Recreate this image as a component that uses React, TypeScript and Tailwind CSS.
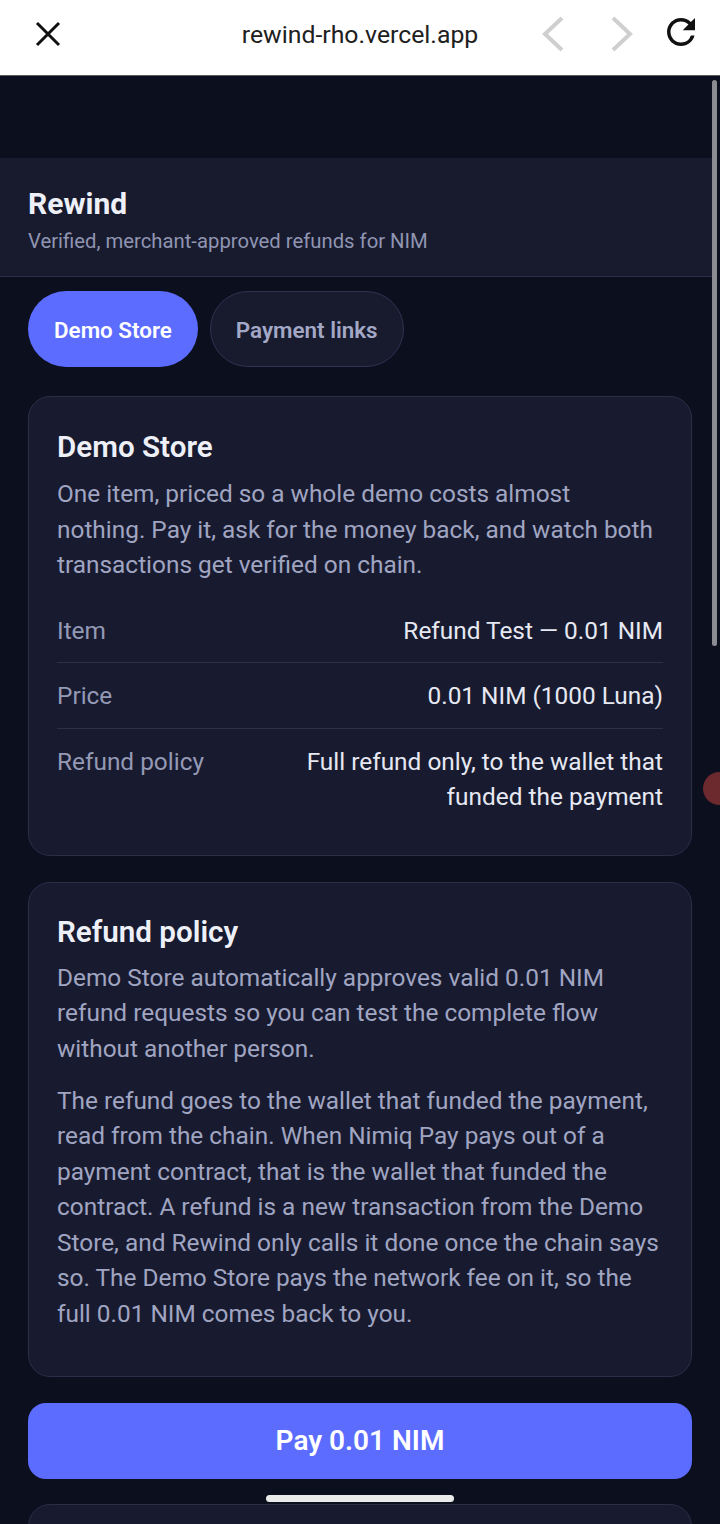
import React from "react";

const rows: { label: string; value: string }[] = [
  { label: "Item", value: "Refund Test — 0.01 NIM" },
  { label: "Price", value: "0.01 NIM (1000 Luna)" },
  { label: "Refund policy", value: "Full refund only, to the wallet that funded the payment" },
];

function BrowserBar() {
  return (
    <div className="relative flex h-[76px] items-center border-b border-[#5c5c5c] bg-white">
      <svg className="absolute left-[34px] top-[20px]" width="28" height="28" viewBox="0 0 28 28">
        <path d="M3 3 L25 25 M25 3 L3 25" stroke="#111" strokeWidth="3" fill="none" />
      </svg>
      <div className="w-full pb-[5px] text-center text-[24.8px] text-[#202020]">rewind-rho.vercel.app</div>
      <svg className="absolute left-[540px] top-[15px]" width="26" height="38" viewBox="0 0 26 38">
        <path d="M22 3 L5 19 L22 35" stroke="#cfcfcf" strokeWidth="4" fill="none" />
      </svg>
      <svg className="absolute left-[609px] top-[15px]" width="26" height="38" viewBox="0 0 26 38">
        <path d="M4 3 L21 19 L4 35" stroke="#cfcfcf" strokeWidth="4" fill="none" />
      </svg>
      <svg className="absolute left-[660px] top-[11px]" width="42" height="42" viewBox="0 0 24 24">
        <path
          fill="#111"
          d="M17.65 6.35A7.958 7.958 0 0012 4c-4.42 0-7.99 3.58-7.99 8s3.57 8 7.99 8c3.73 0 6.84-2.55 7.73-6h-2.08A5.99 5.99 0 0112 18c-3.31 0-6-2.690-6-6s2.69-6 6-6c1.66 0 3.14.69 4.22 1.78L13 11h7V4l-2.35 2.35z"
        />
      </svg>
    </div>
  );
}

export default function App() {
  return (
    <div className="relative h-[1524px] w-[720px] overflow-hidden bg-[#0c0f1e] font-['Roboto',sans-serif]">
      <BrowserBar />
      <div className="h-[82px]" />

      <header className="border-b border-[#2a2e46] bg-[#181b2e] px-[28px] pb-[20px] pt-[28px]">
        <h1 className="text-[30px] font-bold leading-[36px] text-[#eef0f8]">Rewind</h1>
        <p className="mt-[4px] text-[20.3px] leading-[30px] text-[#9095b2]">
          Verified, merchant-approved refunds for NIM
        </p>
      </header>

      <main className="px-[28px] pt-[14px]">
        <nav className="flex gap-[12px]">
          <button className="h-[76px] rounded-full bg-[#5b6cff] px-[26px] pt-[3px] text-[22.4px] font-semibold text-white">
            Demo Store
          </button>
          <button className="h-[76px] rounded-full border border-[#2f3351] bg-[#181b2e] px-[25px] pt-[3px] text-[22.4px] font-semibold text-[#a3a8c6]">
            Payment links
          </button>
        </nav>

        <section className="mt-[29px] rounded-[22px] border border-[#2a2e47] bg-[#181b2f] px-[28px] pb-[26px] pt-[32px]">
          <h2 className="text-[29.6px] font-semibold leading-[36px] text-[#eef0f8]">Demo Store</h2>
          <p className="mt-[11px] text-[24.4px] leading-[35.5px] text-[#a0a5c2]">
            One item, priced so a whole demo costs almost nothing. Pay it, ask for the money back, and
            watch both transactions get verified on chain.
          </p>
          <div className="mt-[15px]">
            {rows.map((r, i) => (
              <div
                key={r.label}
                className={`flex justify-between gap-6 pb-[14px] pt-[15px] text-[24.4px] leading-[35.5px] ${
                  i > 0 ? "border-t border-[#2c3049]" : ""
                }`}
              >
                <span className="shrink-0 text-[#9499b5]">{r.label}</span>
                <span className="max-w-[362px] text-right text-[#e6e8f2]">{r.value}</span>
              </div>
            ))}
          </div>
        </section>

        <section className="mt-[26px] rounded-[22px] border border-[#2a2e47] bg-[#181b2f] px-[28px] pb-[28px] pt-[31px]">
          <h2 className="text-[29.6px] font-semibold leading-[36px] text-[#eef0f8]">Refund policy</h2>
          <div className="mt-[10px] text-[24.4px] leading-[35.5px] text-[#a0a5c2]">
            <p className="mb-[16.5px]">
              Demo Store automatically approves valid 0.01 NIM refund requests so you can test the
              complete flow without another person.
            </p>
            <p className="mb-[16.5px]">
              The refund goes to the wallet that funded the payment, read from the chain. When Nimiq Pay
              pays out of a payment contract, that is the wallet that funded the contract. A refund is a
              new transaction from the Demo Store, and Rewind only calls it done once the chain says so.
              The Demo Store pays the network fee on it, so the full 0.01 NIM comes back to you.
            </p>
          </div>
        </section>

        <button className="mt-[26px] h-[76px] w-full rounded-[18px] bg-[#5b6cff] text-[28px] font-semibold text-white">
          Pay 0.01 NIM
        </button>

        <section className="mt-[25px] h-[200px] rounded-[22px] border border-[#2a2e47] bg-[#181b2f]" />
      </main>

      {/* scrollbar, side bubble, home indicator */}
      <div className="absolute right-0 top-[77px] h-[200px] w-[8px] bg-[#0c0f1e]" />
      <div className="absolute left-[712px] top-[80px] h-[566px] w-[5px] rounded-full bg-[#8b8c92]" />
      <div className="absolute left-[703px] top-[772px] h-[33px] w-[33px] rounded-full bg-[#6c2a2e]" />
      <div className="absolute left-[266px] top-[1495px] h-[7px] w-[188px] rounded-full bg-[#ebebeb]" />
    </div>
  );
}
